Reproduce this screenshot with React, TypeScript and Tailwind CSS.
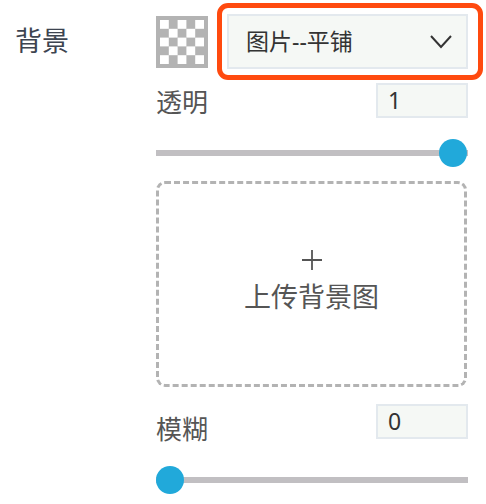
import React from "react"

const Checker = () => {
    const cells = []
    for (let r = 0; r < 5; r++) {
        for (let c = 0; c < 5; c++) {
            if ((r + c) % 2 === 0) cells.push(<rect key={`${r}-${c}`} x={4 + c * 8.8} y={4 + r * 8.8} width="8.8" height="8.8" fill="#ffffff" />)
        }
    }
    return (
        <svg width="52" height="52" viewBox="0 0 52 52" className="shrink-0">
            <rect width="52" height="52" fill="#b3b3b3" />
            {cells}
        </svg>
    )
}

const Slider = ({ value }: { value: number }) => {
    return (
        <div className="relative h-[28px] w-[312px] flex items-center">
            <div className="h-[6px] w-full bg-[#c1bfc2]" />
            <div className="absolute top-0 h-[28px] w-[28px] rounded-full bg-[#21a9da]" style={{ left: `${value * (312 - 28) + (value === 0 ? 0 : -1)}px` }} />
        </div>
    )
}

const NumInput = ({ value }: { value: string }) => (
    <div className="w-[92px] h-[35px] bg-[#f5f8f5] border-2 border-[#e3e9ee] flex items-center pl-[10px] text-[23px] text-[#333]">
        {value}
    </div>
)

const App = () => {
    return (
        <div className="w-[486px] h-[504px] bg-white flex pt-[14px] pl-[15px]" style={{ fontFamily: '"Noto Sans", "Noto Sans CJK SC", sans-serif' }}>
            <div className="w-[141px] h-[55px] flex items-center text-[27px] text-[#3d4450]">背景</div>

            <div className="w-[312px] flex flex-col">
                <div className="flex items-center gap-[19px]">
                    <Checker />
                    <div className="relative">
                        <div className="w-[241px] h-[55px] bg-[#f5f8f5] border-2 border-[#e3e9ee] flex items-center pl-[17px] pr-[14px] text-[23px] text-[#333]">
                            <span className="flex-1">图片--平铺</span>
                            <svg width="22" height="14" viewBox="0 0 22 14">
                                <polyline points="1,1 11,12 21,1" fill="none" stroke="#333" strokeWidth="2" />
                            </svg>
                        </div>
                        {/* highlight */}
                        <div className="absolute -left-[10px] -right-[15px] -top-[11px] -bottom-[11px] border-[5px] border-[#ff4a0f] rounded-[11px]" />
                    </div>
                </div>

                <div className="mt-[14px] flex items-start justify-between">
                    <span className="text-[26px] leading-[34px] text-[#555] mt-[2px]">透明</span>
                    <NumInput value="1" />
                </div>

                <div className="mt-[20px]">
                    <Slider value={1} />
                </div>

                <div className="mt-[14px] h-[206px] w-[311px] border-[3px] border-dashed border-[#b3b3b3] rounded-[9px] flex flex-col items-center justify-center text-[#555]">
                    <svg width="22" height="22" viewBox="0 0 22 22" className="-mt-[4px]">
                        <path d="M11 1 V21 M1 11 H21" stroke="#555" strokeWidth="1.8" />
                    </svg>
                    <span className="text-[27px] mt-[8px] leading-[36px]">上传背景图</span>
                </div>

                <div className="mt-[17px] flex items-start justify-between">
                    <span className="text-[26px] leading-[34px] text-[#555] mt-[8px]">模糊</span>
                    <NumInput value="0" />
                </div>

                <div className="mt-[20px]">
                    <Slider value={0} />
                </div>
            </div>
        </div>
    )
}

export default App
